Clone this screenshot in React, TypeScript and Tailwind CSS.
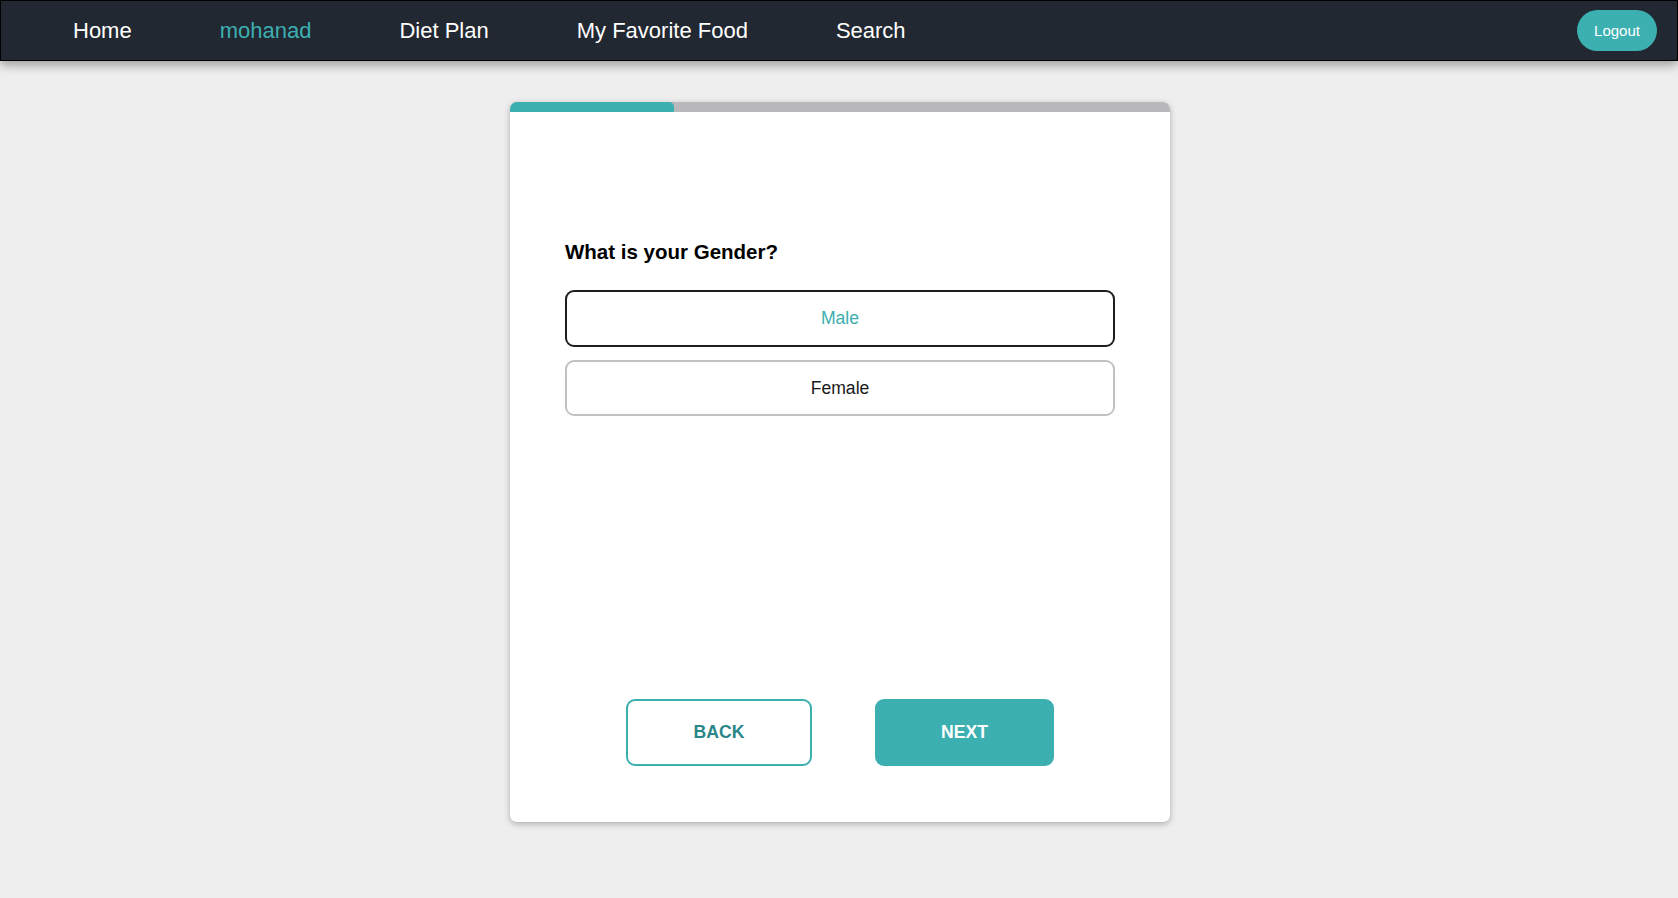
import React from "react";

export default function App() {
  const font = { fontFamily: '"Liberation Sans", Arial, sans-serif' };
  return (
    <div className="min-h-[898px] w-full bg-[#eeeeee]" style={font}>
      <nav className="flex h-[61px] items-center justify-between border border-black bg-[#222831] pl-[72px] pr-[20px] shadow-[0_4px_10px_rgba(0,0,0,0.35)]">
        <ul className="flex items-center gap-[88px] text-[22px] text-white">
          <li>Home</li>
          <li className="text-[#3cafb1]">mohanad</li>
          <li>Diet Plan</li>
          <li>My Favorite Food</li>
          <li>Search</li>
        </ul>
        <button className="h-[41px] w-[80px] rounded-full bg-[#3cafb1] pt-[2px] text-[15px] text-white">
          Logout
        </button>
      </nav>

      <div className="flex justify-center pl-[2px] pt-[41px]">
        <div className="flex h-[720px] w-[660px] flex-col overflow-hidden rounded-[7px] bg-white shadow-[0_2px_6px_rgba(0,0,0,0.28)]">
          <div className="flex h-[10px] w-full bg-[#b9b8bd]">
            <div className="h-full w-[164px] rounded-tr-[5px] bg-[#3cafb1]" />
          </div>
          <div className="flex flex-1 flex-col px-[55px]">
            <h2 className="mt-[125px] text-[20.5px] font-bold text-black">What is your Gender?</h2>
            <div className="mt-[22px] flex flex-col gap-[13px]">
              <button className="h-[57px] w-full rounded-[9px] border-2 border-[#1b1f22] text-[17.6px] text-[#3cafb1]">
                Male
              </button>
              <button className="h-[56px] w-full rounded-[9px] border-2 border-[#c2c2c4] text-[17.6px] text-[#1a1a1a]">
                Female
              </button>
            </div>
          </div>
          <div className="flex justify-center gap-[63px] pb-[56px]">
            <button className="h-[67px] w-[186px] rounded-[9px] border-2 border-[#3cafb1] text-[17.6px] font-bold text-[#2a8789]">
              BACK
            </button>
            <button className="h-[67px] w-[179px] rounded-[9px] bg-[#3cafb1] text-[17.6px] font-bold text-white">
              NEXT
            </button>
          </div>
        </div>
      </div>
    </div>
  );
}
